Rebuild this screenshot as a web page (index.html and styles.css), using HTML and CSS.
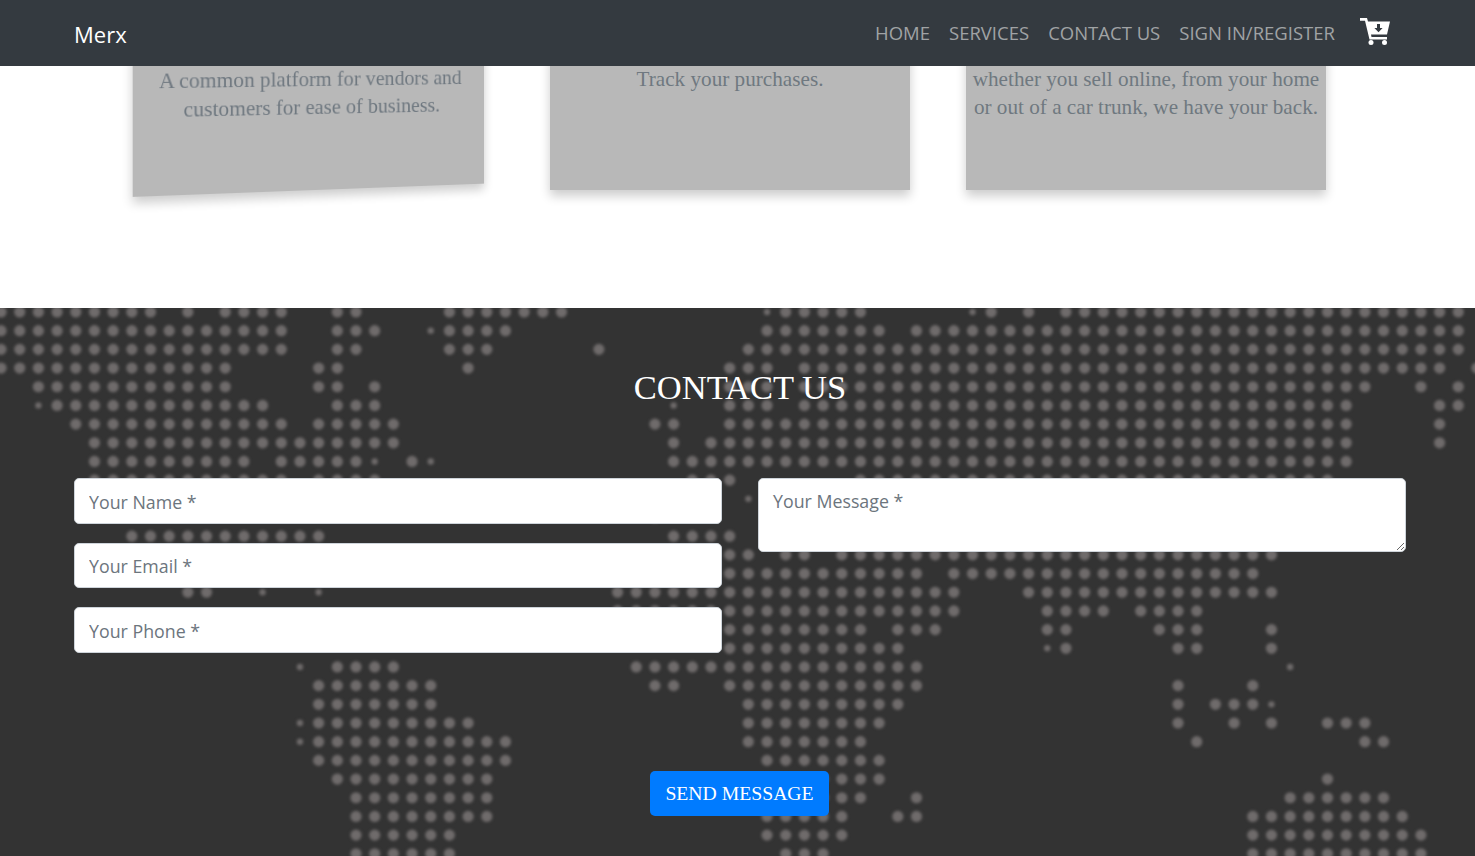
FILE: index.html
```html
<!DOCTYPE html>
<html lang="en">
<head>
  <meta charset="UTF-8">
  <meta name="viewport" content="width=device-width, initial-scale=1.0">
  <link rel="stylesheet" href="styles.css">
  <title>Merx</title>
</head>
<body>
  <nav class="navbar">
    <a class="brand" href="#">Merx</a>
    <ul class="nav-links">
      <li><a href="#">HOME</a></li>
      <li><a href="#">SERVICES</a></li>
      <li><a href="#">CONTACT US</a></li>
      <li><a href="#">SIGN IN/REGISTER</a></li>
    </ul>
    <a class="cart" href="#" aria-label="Cart">
      <svg viewBox="0 0 30 27" width="30" height="27">
        <path fill-rule="evenodd" d="M0 0h7l1 3.5h22l-3 13H11l.5 2.5H27v2.5H9.5L5 2.8H0zM17 6v4h-2.6l4.1 4.3 4.1-4.3H20V6z"/>
        <circle cx="11" cy="24.5" r="2.5"/>
        <circle cx="24.5" cy="24.5" r="2.5"/>
      </svg>
    </a>
  </nav>

  <section class="services">
    <div class="card card-tilted">
      <p>A common platform for vendors and customers for ease of business.</p>
    </div>
    <div class="card">
      <p>Track your purchases.</p>
    </div>
    <div class="card">
      <p>whether you sell online, from your home or out of a car trunk, we have your back.</p>
    </div>
  </section>

  <section class="contact">
    <!-- dot map, one unit = one grid step -->
    <svg class="world-map" viewBox="0 0 79 29" aria-hidden="true">
      <path class="dots" d="
        M0 0h8.01M10 0h.01M12 0h3.01M18 0h1.01M24 0h6.01M42 0h4.01M53 0h.01M55 0h.01M57 0h21.01
        M0 1h15.01M18 1h2.01M24 1h3.01M41 1h6.01M49 1h29.01
        M0 2h15.01M18 2h1.01M24 2h2.01M32 2h.01M40 2h38.01
        M0 3h12.01M17 3h1.01M25 3h.01M39 3h2.01M43 3h34.01M79 3h.01
        M2 4h10.01M17 4h1.01M20 4h.01M39 4h2.01M43 4h30.01M76 4h.01M78 4h.01
        M3 5h11.01M18 5h2.01M39 5h2.01M43 5h29.01M77 5h1.01
        M4 6h11.01M17 6h4.01M35 6h1.01M39 6h33.01M77 6h.01
        M5 7h16.01M36 7h.01M38 7h34.01M77 7h.01
        M5 8h8.01M15 8h4.01M22 8h.01M36 8h36.01
        M5 9h10.01M17 9h3.01M37 9h2.01M46 9h25.01
        M35 11h.01
        M7 12h10.01M36 12h3.01
        M39 13h1.01M42 13h1.01M45 13h23.01
        M39 14h10.01M51 14h16.01
        M10 15h1.01M33 15h18.01M55 15h13.01
        M33 16h18.01M56 16h3.01M61 16h3.01
        M39 17h7.01M48 17h2.01M56 17h1.01M62 17h2.01M68 17h.01
        M39 18h9.01M57 18h.01M63 18h1.01M68 18h.01
        M18 19h3.01M34 19h15.01
        M17 20h6.01M35 20h1.01M39 20h10.01M63 20h.01M67 20h.01
        M17 21h6.01M40 21h8.01M63 21h.01M65 21h2.01
        M17 22h8.01M40 22h7.01M63 22h.01M66 22h.01M68 22h.01M71 22h2.01
        M17 23h10.01M40 23h6.01M64 23h.01M73 23h1.01
        M17 24h10.01M41 24h6.01
        M18 25h8.01M41 25h6.01M71 25h.01
        M19 26h7.01M41 26h5.01M49 26h.01M69 26h5.01
        M19 27h7.01M41 27h4.01M48 27h1.01M67 27h8.01
        M19 28h5.01M41 28h4.01M67 28h9.01
        M19 29h5.01M42 29h2.01M67 29h9.01"/>
      <path class="dots dots-small" d="M41 0h.01M52 0h.01M23 1h.01M2 5h.01M36 5h.01M20 8h.01M23 8h.01M40 10h.01M14 15h.01M17 15h.01M56 18h.01M16 19h.01M69 19h.01M68 21h.01M16 22h.01M16 23h.01"/>
    </svg>

    <div class="contact-inner">
      <h2 class="contact-title">CONTACT US</h2>
      <form class="contact-form">
        <div class="form-col">
          <input type="text" placeholder="Your Name *">
          <input type="email" placeholder="Your Email *">
          <input type="tel" placeholder="Your Phone *">
        </div>
        <div class="form-col">
          <textarea placeholder="Your Message *"></textarea>
        </div>
        <button class="send-btn" type="button">SEND MESSAGE</button>
      </form>
    </div>
  </section>
</body>
</html>
```

FILE: styles.css
```css
html, body {
  height: 856px;
  overflow: hidden;
}

body {
  margin: 0;
  font-family: "Liberation Serif", serif;
  background-color: #fff;
}

.navbar {
  position: fixed;
  top: 0;
  left: 0;
  right: 0;
  z-index: 10;
  height: 66px;
  box-sizing: border-box;
  padding: 0 85px 0 74px;
  display: flex;
  align-items: center;
  background-color: #343a40;
  font-family: "Open Sans", sans-serif;
}

.brand {
  margin: 2px auto 0 0;
  color: #fff;
  font-size: 22px;
  text-decoration: none;
}

.nav-links {
  display: flex;
  gap: 19px;
  margin: -1px 0 0;
  padding: 0;
  list-style: none;
}

.nav-links a {
  color: #a0a3a5;
  font-size: 18.5px;
  text-decoration: none;
}

.cart {
  display: block;
  height: 27px;
  margin: -3px 0 0 25px;
}

.cart svg {
  fill: #fff;
}

/* the page is scrolled: tops of the cards sit under the navbar */
.services {
  display: flex;
  gap: 56px;
  height: 446px;
  box-sizing: border-box;
  margin-top: -138px;
  padding-left: 134px;
}

.card {
  width: 360px;
  height: 328px;
  box-sizing: border-box;
  padding: 203px 4px 0;
  background-color: #b8b8b8;
  box-shadow: 0 6px 10px rgba(0, 0, 0, 0.2);
}

.card p {
  margin: 0;
  color: #6f7880;
  font-size: 21.2px;
  line-height: 28px;
  text-align: center;
}

.card-tilted p {
  padding: 0 12px;
}

.card-tilted {
  transform: translateX(1.5px) perspective(1000px) rotateY(13deg);
}

.contact {
  position: relative;
  height: 548px;
  overflow: hidden;
  background-color: #333;
}

.world-map {
  position: absolute;
  top: 4.3px;
  left: 1.3px;
  width: 1476px;
  height: 541.8px;
  overflow: visible;
  filter: blur(1.4px);
}

.dots {
  fill: none;
  stroke: #6f6b6b;
  stroke-width: 0.6;
  stroke-linecap: round;
  stroke-dasharray: 0 1;
}

.dots-small {
  stroke-width: 0.34;
}

.contact-inner {
  position: relative;
  padding: 59px 69px 0 74px;
}

.contact-title {
  margin: 0 0 71px;
  color: #fff;
  font-size: 34.5px;
  font-weight: 400;
  line-height: 40px;
  text-align: center;
}

.contact-form {
  display: grid;
  grid-template-columns: 1fr 1fr;
  column-gap: 36px;
}

.form-col {
  display: flex;
  flex-direction: column;
  gap: 19px;
}

.contact-form input,
.contact-form textarea {
  box-sizing: border-box;
  width: 100%;
  border: 1px solid #ced4da;
  border-radius: 5px;
  background-color: #fff;
  font-family: "Open Sans", sans-serif;
  font-size: 17.8px;
  outline: none;
}

.contact-form input {
  height: 45.5px;
  padding: 8px 14px 6px;
}

.contact-form textarea {
  display: block;
  height: 74px;
  padding: 10px 14px 6px;
}

.contact-form ::placeholder {
  color: #6c757d;
  opacity: 1;
}

.send-btn {
  grid-column: 1 / -1;
  justify-self: center;
  width: 179px;
  height: 45px;
  margin: 118px 1px 0 0;
  padding: 0;
  border: none;
  border-radius: 5px;
  background-color: #007bff;
  color: #fff;
  font-family: "Liberation Serif", serif;
  font-size: 19.7px;
}
```
